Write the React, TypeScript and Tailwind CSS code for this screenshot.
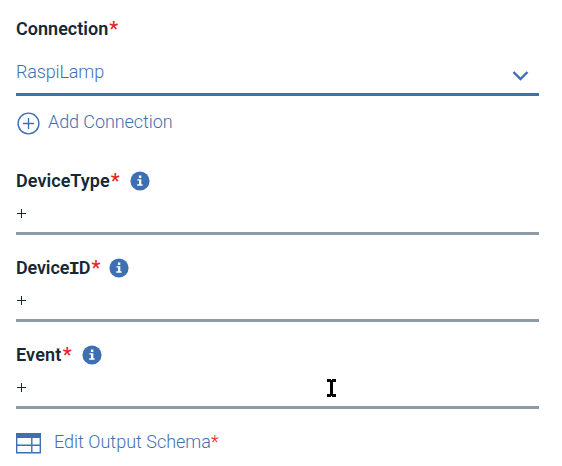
import React from "react";

function InfoIcon() {
  return (
    <svg className="h-[20px] w-[20px] shrink-0" viewBox="0 0 20 20">
      <circle cx="10" cy="10" r="9.6" fill="#3d70b2" />
      <path d="M8.9 4.6h2.4v2.3H8.9zM7.4 8.2h3.9v5.1h1.3v1.4H7.2v-1.4h1.8V9.6H7.4z" fill="#fff" />
    </svg>
  );
}

function Star() {
  return <span className="ml-px w-[9px] text-[20px] font-medium text-[#e62325]">*</span>;
}

function Field({ children, cursor }: { children: React.ReactNode; cursor?: boolean }) {
  return (
    <div className="relative flex h-[87px] flex-col border-b-[3px] border-[#8c9ba5]">
      <div className="mt-[19px] flex h-[28px] items-center text-[#152935]">{children}</div>
      <div className="mt-[4px] flex h-[28px] items-center pl-[1px]">
        <svg className="h-[9px] w-[9px]" viewBox="0 0 9 9" shapeRendering="crispEdges">
          <path d="M0 4h9v1H0zM4 0h1v9H4z" fill="#152935" />
        </svg>
      </div>
      {cursor && (
        <svg className="absolute left-[311px] top-[57px] h-[18px] w-[9px]" viewBox="0 0 9 18" shapeRendering="crispEdges">
          <path d="M0 0h4v1h1V0h4v3H6v12h3v3H5v-1H4v1H0v-3h3V3H0z" fill="#000" />
        </svg>
      )}
    </div>
  );
}

export default function App() {
  return (
    <main className="flex h-[466px] w-[562px] flex-col bg-white pl-[16px] pr-[23px] font-['Roboto','Noto_Sans',sans-serif] text-[18px] leading-[28px] text-[#3d70b2]">
      <div className="mt-[15px] flex h-[28px] items-center text-[#152935]">
        <span className="font-semibold tracking-[0.02px]">Connection</span>
        <Star />
      </div>
      <div className="mt-[14px] flex h-[39px] items-start justify-between border-b-[3px] border-[#3d70b2]">
        <span className="mt-px font-light tracking-[-0.15px]">RaspiLamp</span>
        <svg className="mr-[10px] mt-[13px] h-[12px] w-[17px]" viewBox="0 0 17 12">
          <path d="M1.5 2l7 7 7-7" fill="none" stroke="#3d70b2" strokeWidth="2.4" />
        </svg>
      </div>
      <div className="mt-[11px] flex h-[30px] items-start pl-[1px]">
        <svg className="mt-[5px] h-[23px] w-[23px]" viewBox="0 0 23 23" fill="none" stroke="#3d70b2">
          <circle cx="11.5" cy="11.5" r="10.4" strokeWidth="1.4" />
          <path d="M6 11.5h11M11.5 6v11" strokeWidth="1.4" />
        </svg>
        <span className="ml-[8px] mt-px font-light tracking-[-0.08px]">Add Connection</span>
      </div>
      <div className="mt-[11px]">
        <Field>
          <span className="font-semibold tracking-[0.05px]">DeviceType</span>
          <Star />
          <span className="ml-[10px]"><InfoIcon /></span>
        </Field>
        <Field>
          <span className="font-semibold tracking-[-0.15px]">
            Device<span className="mx-[-0.8px] font-['Liberation_Mono'] text-[19px] font-bold leading-none">I</span>D
          </span>
          <Star />
          <span className="ml-[9px]"><InfoIcon /></span>
        </Field>
        <Field cursor>
          <span className="font-semibold tracking-[0.2px]">Event</span>
          <Star />
          <span className="ml-[10px]"><InfoIcon /></span>
        </Field>
      </div>
      <div className="mt-[19px] flex h-[28px] items-start">
        <svg className="mt-[5px] h-[21px] w-[25px]" viewBox="0 0 25 21">
          <path d="M.7.7h23.6v19.1H.7zM0 12.2h25M15.8 4v16" fill="none" stroke="#3d70b2" strokeWidth="1.4" />
          <path d="M0 0h25v5H0z" fill="#3d70b2" />
        </svg>
        <span className="ml-[13px] font-light">Edit Output Schema</span>
        <span className="font-light text-[#e62325]">*</span>
      </div>
    </main>
  );
}
